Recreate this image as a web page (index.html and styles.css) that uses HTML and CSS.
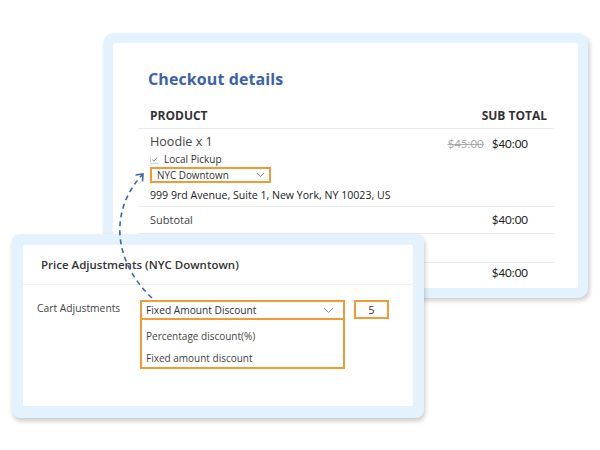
FILE: index.html
```html
<!DOCTYPE html>
<html lang="en">
<head>
  <meta charset="UTF-8" />
  <title>Checkout Price Adjustments</title>
  <link rel="stylesheet" href="styles.css">
</head>
<body>
  <div class="stage">

    <!-- Checkout details card -->
    <div class="checkout">
      <div class="checkout-inner">
        <h2 class="title">Checkout details</h2>

        <div class="row head">
          <span>PRODUCT</span>
          <span>SUB TOTAL</span>
        </div>

        <div class="row item">
          <div class="item-info">
            <div class="item-name">Hoodie x 1</div>
            <label class="pickup">
              <svg class="check" width="9" height="9" viewBox="0 0 9 9">
                <path d="M0.5 0.5 V8.5 H8.5" fill="none" stroke="#d6d6d6" stroke-width="1"/>
                <path d="M2.2 4.6 L3.9 6.2 L7 2.6" fill="none" stroke="#777" stroke-width="0.9"/>
              </svg>
              Local Pickup
            </label>
            <div class="select small">
              <span>NYC Downtown</span>
              <svg width="9" height="6" viewBox="0 0 9 6"><path d="M1 1 L4.5 4.5 L8 1" fill="none" stroke="#888" stroke-width="1"/></svg>
            </div>
            <div class="address">999 9rd Avenue, Suite 1, New York, NY 10023, US</div>
          </div>
          <div class="prices">
            <span class="old">$45:00</span>
            <span>$40:00</span>
          </div>
        </div>

        <div class="row line">
          <span>Subtotal</span>
          <span class="price">$40:00</span>
        </div>
        <div class="row empty"></div>
        <div class="row total">
          <span></span>
          <span class="price">$40:00</span>
        </div>
      </div>
    </div>

    <!-- Price adjustments card, laid over the checkout card -->
    <div class="adjust">
      <div class="adjust-inner">
        <div class="adjust-title">Price Adjustments (NYC Downtown)</div>
        <div class="adjust-row">
          <div class="adjust-label">Cart Adjustments</div>
          <div class="dropdown">
            <div class="select big">
              <span>Fixed Amount Discount</span>
              <svg width="11" height="7" viewBox="0 0 11 7"><path d="M1 1 L5.5 5.5 L10 1" fill="none" stroke="#999" stroke-width="1"/></svg>
            </div>
            <ul class="options">
              <li>Percentage discount(%)</li>
              <li>Fixed amount discount</li>
            </ul>
          </div>
          <div class="amount">5</div>
        </div>
      </div>
    </div>

    <!-- dashed link between the two selects -->
    <svg class="link" width="600" height="450" viewBox="0 0 600 450">
      <path d="M152 298 C112 260 110 210 142 175" fill="none" stroke="#3e64b0" stroke-width="1.6" stroke-dasharray="5 4"/>
      <path d="M135.5 175 L143 174 L142.5 181.5" fill="none" stroke="#3e64b0" stroke-width="1.6"/>
    </svg>
  </div>
</body>
</html>
```

FILE: styles.css
```css
* {
  box-sizing: border-box;
  margin: 0;
  padding: 0;
}

body {
  font-family: 'Open Sans', 'Liberation Sans', sans-serif;
  background-color: #fff;
  color: #333;
}

.stage {
  position: relative;
  width: 600px;
  height: 450px;
  overflow: hidden;
}

/* checkout card */
.checkout {
  margin: 33px 0 0 103px;
  width: 485px;
  height: 265px;
  padding: 10px;
  background-color: #e3f2fc;
  border-radius: 10px;
  box-shadow: 2px 3px 4px rgba(0, 0, 0, 0.18);
}

.checkout-inner {
  height: 100%;
  background-color: #fff;
  border-radius: 2px;
  padding: 0 24px 0 25px;
}

.title {
  padding-top: 25px;
  margin-left: 10px;
  font-size: 16px;
  line-height: 22px;
  font-weight: 700;
  letter-spacing: 0.1px;
  color: #3b62ad;
}

.row {
  display: flex;
  justify-content: space-between;
  padding-left: 12px;
  padding-right: 26px;
  border-bottom: 1px solid #ececec;
  font-size: 11px;
  line-height: 14px;
}

.head {
  margin-top: 18px;
  padding-right: 7px;
  padding-bottom: 4px;
  font-size: 12px;
  font-weight: 700;
  line-height: 16px;
  color: #333;
}

.item {
  padding-top: 4px;
  padding-bottom: 4px;
}

.item-name {
  font-size: 12.6px;
  line-height: 18px;
  color: #444;
}

.pickup {
  display: flex;
  align-items: center;
  gap: 5px;
  margin-top: 1px;
  font-size: 10px;
  line-height: 14px;
  color: #333;
}

.select {
  display: flex;
  align-items: center;
  justify-content: space-between;
  border: 2px solid #f39a34;
  background-color: #fff;
  font-size: 10.2px;
  color: #333;
}

.select.small {
  width: 121px;
  height: 16px;
  margin-top: 1px;
  padding: 0 4px 0 5px;
  font-size: 9.9px;
}

.address {
  margin-top: 5px;
  font-size: 10.6px;
  line-height: 14px;
  color: #222;
}

.prices {
  display: flex;
  gap: 8px;
  padding-top: 4px;
  font-family: 'Lato', 'Open Sans', sans-serif;
  font-size: 11.5px;
  color: #222;
}

.prices .old {
  color: #aaa;
  text-decoration: line-through;
}

.price {
  font-family: 'Lato', 'Open Sans', sans-serif;
  font-size: 11.5px;
  color: #222;
}

.line {
  padding-top: 6px;
  padding-bottom: 6px;
  color: #444;
}

.empty {
  height: 29px;
}

.total {
  padding-top: 3px;
  border-bottom: none;
}

/* price adjustments card */
.adjust {
  position: absolute;
  left: 12px;
  top: 234px;
  width: 412px;
  height: 184px;
  padding: 11px 11px 12px 11px;
  background-color: #e3f2fc;
  border-radius: 8px;
  box-shadow: 1px 3px 5px rgba(0, 0, 0, 0.22);
}

.adjust-inner {
  height: 100%;
  background-color: #fff;
  border-radius: 2px;
}

.adjust-title {
  padding: 11px 0 10px 18px;
  border-bottom: 1px solid #f1f1f1;
  font-size: 11.5px;
  line-height: 18px;
  font-weight: 600;
  color: #333;
}

.adjust-row {
  display: flex;
  align-items: flex-start;
  padding: 15px 0 0 14px;
}

.adjust-label {
  width: 103px;
  font-size: 10.3px;
  line-height: 16px;
  color: #444;
}

.dropdown {
  width: 205px;
}

.select.big {
  height: 20px;
  padding: 0 9px 0 4px;
}

.options {
  list-style: none;
  height: 49px;
  border: 2px solid #f39a34;
  border-top: none;
  padding-top: 5px;
  font-size: 10px;
  color: #444;
}

.options li {
  padding-left: 4px;
  line-height: 22px;
}

.amount {
  width: 35px;
  height: 19px;
  margin-left: 9px;
  border: 2px solid #f39a34;
  text-align: center;
  font-size: 11px;
  line-height: 15px;
  color: #333;
}

.link {
  position: absolute;
  left: 0;
  top: 0;
  pointer-events: none;
}
```
